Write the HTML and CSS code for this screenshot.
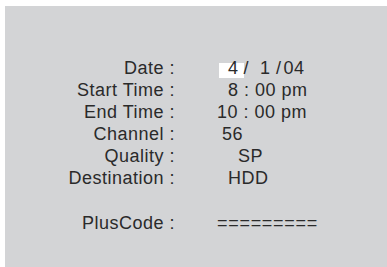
FILE: index.html
```html
<!DOCTYPE html>
<html>
<head>
<meta charset="utf-8">
<link rel="stylesheet" href="styles.css">
</head>
<body>
<div class="screen">
  <div class="table">
    <div class="label">Date :</div>
    <div class="value v-date"><span class="cursor">4</span>/<span class="d-rest">1 /<span class="d-year">04</span></span></div>
    <div class="label">Start Time :</div>
    <div class="value v-start">8 : 00 pm</div>
    <div class="label">End Time :</div>
    <div class="value v-end">10 : 00 pm</div>
    <div class="label">Channel :</div>
    <div class="value v-channel">56</div>
    <div class="label">Quality :</div>
    <div class="value v-quality">SP</div>
    <div class="label">Destination :</div>
    <div class="value v-dest">HDD</div>
    <div class="label gap">PlusCode :</div>
    <div class="value gap v-code">=========</div>
  </div>
</div>
</body>
</html>
```
FILE: styles.css
```css
html, body {
  margin: 0;
  padding: 0;
  background: #ffffff;
}
.screen {
  margin: 6px 0 0 5px;
  height: 261px;
  background: #d3d4d6;
  box-sizing: border-box;
  padding-top: 51px;
  font-family: "Liberation Sans", Arial, sans-serif;
  font-size: 18px;
  line-height: 22px;
  color: #2a2a2a;
  letter-spacing: 0.5px;
}
.table {
  display: grid;
  grid-template-columns: 170px auto;
  column-gap: 42px;
  justify-content: start;
}
.label {
  text-align: right;
  white-space: pre;
}
.value {
  white-space: pre;
}
.gap {
  margin-top: 23px;
}
.cursor {
  padding: 0 5px 0 9px;
  background: linear-gradient(#ffffff, #ffffff) no-repeat;
  background-position: 0 100%;
  background-size: 100% 15px;
}
.d-rest { margin-left: 11px; }
.d-year { margin-left: 2px; }
.v-date { margin-left: 2px; }
.v-start { margin-left: 11px; }
.v-end { margin-left: 0; }
.v-channel { margin-left: 5px; }
.v-quality { margin-left: 21px; }
.v-dest { margin-left: 11px; }
.v-code { margin-left: 0; letter-spacing: 0.7px; }
```
